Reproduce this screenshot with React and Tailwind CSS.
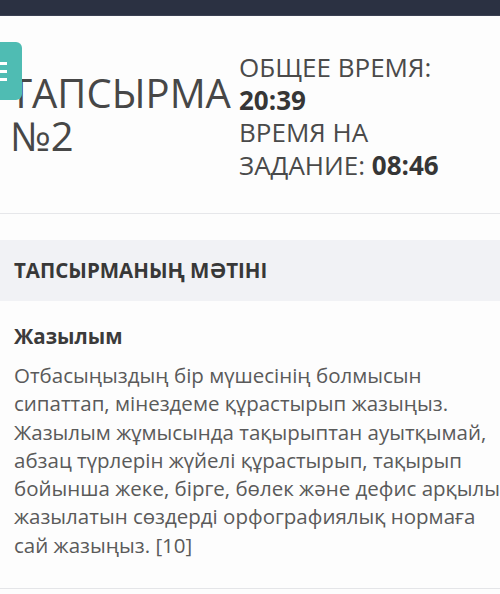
import React from 'react'

const lines = [
  'Отбасыңыздың бір мүшесінің болмысын',
  'сипаттап, мінездеме құрастырып жазыңыз.',
  'Жазылым жұмысында тақырыптан ауытқымай,',
  'абзац түрлерін жүйелі құрастырып, тақырып',
  'бойынша жеке, бірге, бөлек және дефис арқылы',
  'жазылатын сөздерді орфографиялық нормаға',
  'сай жазыңыз. [10]',
]

export default function App() {
  return (
    <div className="w-[500px] h-[594px] overflow-hidden bg-[#fdfdfd] relative font-['Open_Sans',sans-serif]">
      <div className="h-[16px] bg-[#2b3142] border-b border-[#3a4052]" />

      <button className="absolute left-0 top-[42px] w-[22px] h-[58px] bg-[#4fbcb3] rounded-r-md flex flex-col justify-center gap-[5px] z-10">
        <span className="block w-[7px] h-[3px] bg-white" />
        <span className="block w-[7px] h-[3px] bg-white" />
        <span className="block w-[7px] h-[3px] bg-white" />
      </button>

      <header className="flex pt-[31px] h-[198px] border-b border-[#e6e7ea]">
        <h1 className="w-[239px] shrink-0 pl-[10px] pt-[24px] text-[40px] leading-[43px] text-[#474747] font-normal">
          ТАПСЫРМА
          <br />
          №2
        </h1>
        <div className="pt-[4px] text-[26px] leading-[32.7px] text-[#4a4a4a] whitespace-nowrap">
          <p>ОБЩЕЕ ВРЕМЯ:</p>
          <p className="font-bold text-[#363636]">20:39</p>
          <p>ВРЕМЯ НА</p>
          <p>
            ЗАДАНИЕ: <span className="font-bold text-[#363636]">08:46</span>
          </p>
        </div>
      </header>

      <section className="mt-[26px] h-[61px] bg-[#f1f2f5] flex items-center px-[14px]">
        <h2 className="text-[20.5px] font-bold text-[#383838]">ТАПСЫРМАНЫҢ МӘТІНІ</h2>
      </section>

      <article className="px-[14px] pt-[21px] h-[288px] border-b border-[#e4e5e8]">
        <h3 className="text-[20.5px] font-bold leading-[28px] text-[#3b3b3b]">Жазылым</h3>
        <div className="mt-[11px] text-[20.5px] leading-[28.3px] text-[#5a5a5a] whitespace-nowrap">
          {lines.map((l) => (
            <p key={l}>{l}</p>
          ))}
        </div>
      </article>
    </div>
  )
}
